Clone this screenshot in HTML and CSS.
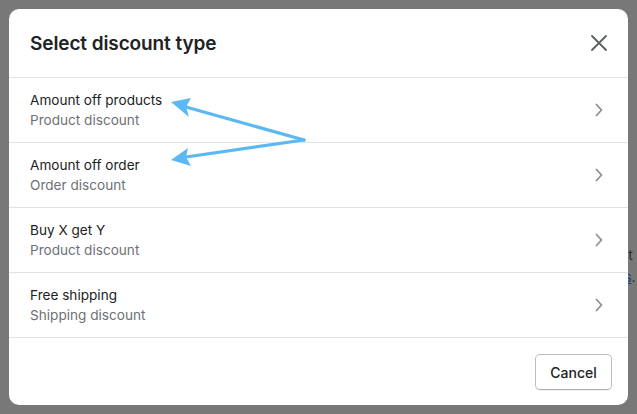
FILE: index.html
```html
<!DOCTYPE html>
<html>
<head>
<meta charset="utf-8">
<link rel="stylesheet" href="styles.css">
</head>
<body>
<div class="backdrop">
  <div class="bg-text bg-t">nt</div>
  <div class="bg-text bg-s"><span class="bg-link">es</span>.</div>
  <div class="modal">
    <div class="header">
      <h1 class="title">Select discount type</h1>
      <button class="close" aria-label="Close">
        <svg width="20" height="20" viewBox="0 0 20 20"><path d="M3 3 L17 17 M17 3 L3 17" stroke="#5c5f62" stroke-width="1.8" fill="none" stroke-linecap="round"/></svg>
      </button>
    </div>
    <div class="list">
      <div class="row">
        <div class="texts"><div class="name">Amount off products</div><div class="sub">Product discount</div></div>
        <svg class="chev" width="10" height="14" viewBox="0 0 10 14"><path d="M2.5 1.5 L7.5 7 L2.5 12.5" stroke="#8c9196" stroke-width="1.8" fill="none" stroke-linecap="round" stroke-linejoin="round"/></svg>
      </div>
      <div class="row">
        <div class="texts"><div class="name">Amount off order</div><div class="sub">Order discount</div></div>
        <svg class="chev" width="10" height="14" viewBox="0 0 10 14"><path d="M2.5 1.5 L7.5 7 L2.5 12.5" stroke="#8c9196" stroke-width="1.8" fill="none" stroke-linecap="round" stroke-linejoin="round"/></svg>
      </div>
      <div class="row">
        <div class="texts"><div class="name">Buy X get Y</div><div class="sub">Product discount</div></div>
        <svg class="chev" width="10" height="14" viewBox="0 0 10 14"><path d="M2.5 1.5 L7.5 7 L2.5 12.5" stroke="#8c9196" stroke-width="1.8" fill="none" stroke-linecap="round" stroke-linejoin="round"/></svg>
      </div>
      <div class="row">
        <div class="texts"><div class="name">Free shipping</div><div class="sub">Shipping discount</div></div>
        <svg class="chev" width="10" height="14" viewBox="0 0 10 14"><path d="M2.5 1.5 L7.5 7 L2.5 12.5" stroke="#8c9196" stroke-width="1.8" fill="none" stroke-linecap="round" stroke-linejoin="round"/></svg>
      </div>
    </div>
    <div class="footer">
      <button class="cancel">Cancel</button>
    </div>
  </div>
  <svg class="arrows" width="637" height="414" viewBox="0 0 637 414">
    <g stroke="#5bb8f3" stroke-width="3.2" stroke-linecap="round" fill="none">
      <path d="M304 140 L186 107"/>
      <path d="M304 140 L186 157"/>
    </g>
    <g fill="#5bb8f3">
      <path d="M171 102 L191 98 L186 107 L189 117 Z"/>
      <path d="M171 160 L188 148 L186 157 L191 166 Z"/>
    </g>
  </svg>
</div>
</body>
</html>
```
FILE: styles.css
```css
* { box-sizing: border-box; }
html, body { margin: 0; padding: 0; }
body {
  width: 637px;
  height: 414px;
  overflow: hidden;
  font-family: Inter, "Noto Sans", "Liberation Sans", sans-serif;
  background: #787878;
}
.backdrop {
  position: relative;
  width: 637px;
  height: 414px;
  padding: 9px;
}
.bg-text {
  position: absolute;
  font-size: 14px;
  color: #2e2e2e;
}
.bg-t { top: 246px; left: 620px; }
.bg-s { top: 268px; left: 616px; }
.bg-link { color: #1e3f74; text-decoration: underline; }
.modal {
  position: relative;
  width: 619px;
  height: 396px;
  background: #fff;
  border-radius: 10px;
  display: flex;
  flex-direction: column;
  overflow: hidden;
}
.header {
  height: 69px;
  border-bottom: 1px solid #e1e3e5;
  display: flex;
  align-items: center;
  justify-content: space-between;
  padding: 0 19px 0 21px;
}
.title {
  margin: 0;
  font-size: 19px;
  font-weight: 600;
  color: #202223;
  letter-spacing: -0.1px;
}
.close {
  border: 0;
  background: none;
  padding: 0;
  width: 20px;
  height: 20px;
  display: flex;
}
.row {
  height: 65px;
  border-bottom: 1px solid #e1e3e5;
  display: flex;
  align-items: center;
  justify-content: space-between;
  padding: 0 24px 0 21px;
}
.name {
  font-size: 13.6px;
  line-height: 20px;
  color: #202223;
}
.sub {
  font-size: 13.6px;
  line-height: 20px;
  color: #6d7175;
}
.footer {
  flex: 1;
  display: flex;
  justify-content: flex-end;
  align-items: flex-start;
  padding: 16px 16px 0 0;
}
.cancel {
  height: 36px;
  width: 77px;
  border: 1px solid #babfc3;
  border-bottom-color: #a9aeb3;
  border-radius: 5px;
  background: #fff;
  font-family: Inter, "Noto Sans", "Liberation Sans", sans-serif;
  font-size: 14px;
  font-weight: 500;
  color: #202223;
  box-shadow: 0 1px 0 rgba(0,0,0,0.05);
}
.arrows {
  position: absolute;
  left: 0;
  top: 0;
  pointer-events: none;
}
```
